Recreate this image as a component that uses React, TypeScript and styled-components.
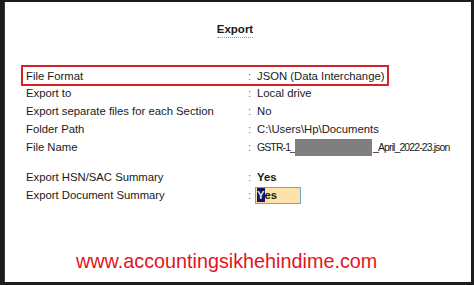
import styled, { createGlobalStyle } from "styled-components";

const Global = createGlobalStyle`
  html, body {
    margin: 0;
    padding: 0;
    background: #ffffff;
  }
  * {
    box-sizing: border-box;
  }
`;

const Frame = styled.div`
  width: 474px;
  height: 285px;
  background: #ffffff;
  border-style: solid;
  border-color: #1c1c1c;
  border-width: 2px 3px 3px 4px;
  box-shadow: inset 1px 0 0 #3a3a3a;
  display: flex;
  flex-direction: column;
  font-family: "Liberation Sans", Arial, sans-serif;
  color: #1a1a1a;
  overflow: hidden;
`;

const Title = styled.div`
  align-self: center;
  margin-top: 21px;
  margin-left: -5px;
  font-size: 11.5px;
  font-weight: bold;
  line-height: 13px;
  padding-bottom: 1px;
  border-bottom: 1px dotted #9a9a9a;
`;

const Form = styled.div`
  margin-top: 28px;
  display: flex;
  flex-direction: column;
`;

const Row = styled.div<{ $gapTop?: number; $boxed?: boolean }>`
  display: grid;
  grid-template-columns: 222px 9px auto;
  align-items: center;
  height: ${(p) => (p.$boxed ? "21px" : "18px")};
  margin-top: ${(p) => p.$gapTop ?? 0}px;
  margin-left: ${(p) => (p.$boxed ? "17px" : "22px")};
  padding-left: ${(p) => (p.$boxed ? "3px" : "0")};
  padding-right: ${(p) => (p.$boxed ? "3px" : "0")};
  border: ${(p) => (p.$boxed ? "2px solid #d8202a" : "none")};
  width: ${(p) => (p.$boxed ? "fit-content" : "auto")};
  margin-bottom: ${(p) => (p.$boxed ? "-3px" : "0")};
  position: relative;
  top: ${(p) => (p.$boxed ? "-1px" : "0")};
  font-size: 11.3px;
  line-height: 18px;
`;

const Label = styled.span`
  white-space: nowrap;
`;

const Colon = styled.span`
  color: #777777;
`;

const Value = styled.span<{ $bold?: boolean }>`
  white-space: nowrap;
  font-weight: ${(p) => (p.$bold ? "bold" : "normal")};
  display: flex;
  align-items: center;
`;

const Narrow = styled.span`
  font-size: 10.5px;
  letter-spacing: -0.9px;
`;

const Redacted = styled.span`
  display: inline-block;
  width: 77px;
  height: 17px;
  background: #7f7f7f;
  margin-right: 1px;
`;

const InputBox = styled.span`
  display: inline-flex;
  align-items: center;
  width: 46px;
  height: 17px;
  margin-left: -2px;
  padding-left: 1px;
  background: #fde3a7;
  border: 1px solid #6fa6c4;
  font-weight: bold;
`;

const Caret = styled.span`
  background: #14145a;
  color: #d8e2ff;
  line-height: 14px;
`;

const Footer = styled.div`
  margin-top: auto;
  margin-bottom: 9px;
  margin-left: 72px;
  font-size: 19.8px;
  color: #e3141c;
`;

const rows = [
  { label: "Export to", value: "Local drive" },
  { label: "Export separate files for each Section", value: "No" },
  { label: "Folder Path", value: "C:\\Users\\Hp\\Documents" },
];

export default function App() {
  return (
    <>
      <Global />
      <Frame>
        <Title>Export</Title>
        <Form>
          <Row $boxed>
            <Label>File Format</Label>
            <Colon>:</Colon>
            <Value>JSON (Data Interchange)</Value>
          </Row>
          {rows.map((r) => (
            <Row key={r.label}>
              <Label>{r.label}</Label>
              <Colon>:</Colon>
              <Value>{r.value}</Value>
            </Row>
          ))}
          <Row>
            <Label>File Name</Label>
            <Colon>:</Colon>
            <Value>
              <Narrow>GSTR-1_</Narrow>
              <Redacted />
              <Narrow>_April_2022-23.json</Narrow>
            </Value>
          </Row>
          <Row $gapTop={12}>
            <Label>Export HSN/SAC Summary</Label>
            <Colon>:</Colon>
            <Value $bold>Yes</Value>
          </Row>
          <Row>
            <Label>Export Document Summary</Label>
            <Colon>:</Colon>
            <Value>
              <InputBox>
                <Caret>Y</Caret>es
              </InputBox>
            </Value>
          </Row>
        </Form>
        <Footer>www.accountingsikhehindime.com</Footer>
      </Frame>
    </>
  );
}
